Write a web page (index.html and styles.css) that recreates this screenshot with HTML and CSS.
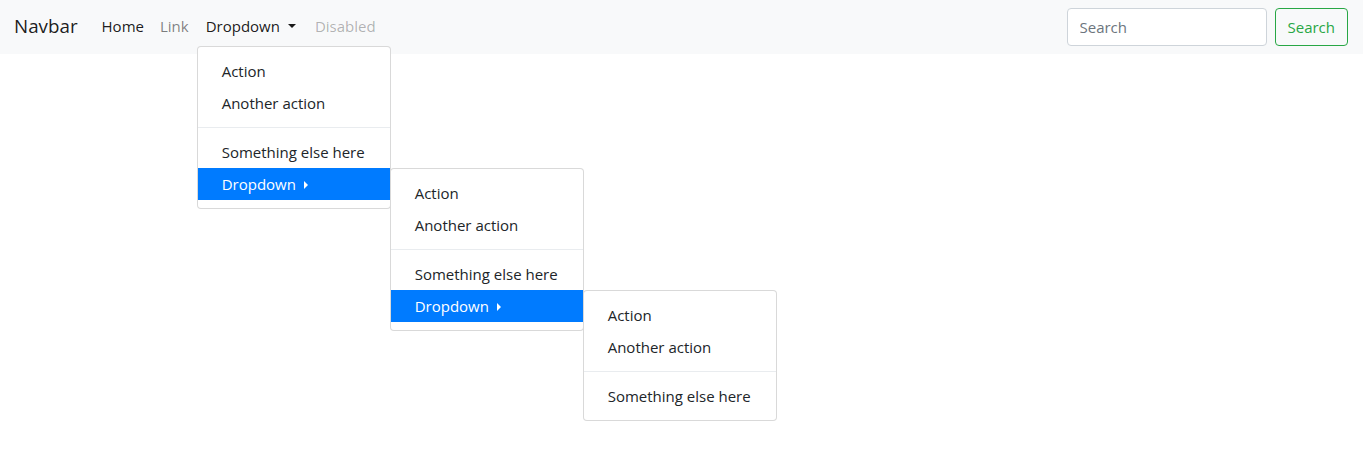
FILE: index.html
```html
<!DOCTYPE html>
<html lang="en">
<head>
<meta charset="utf-8">
<title>Navbar</title>
<link rel="stylesheet" href="styles.css">
</head>
<body>
<nav class="navbar">
  <a class="brand" href="#">Navbar</a>
  <ul class="nav">
    <li class="nav-item"><a class="nav-link active" href="#">Home</a></li>
    <li class="nav-item"><a class="nav-link" href="#">Link</a></li>
    <li class="nav-item dropdown">
      <a class="nav-link active toggle" href="#">Dropdown<span class="caret"></span></a>
      <ul class="menu menu-top">
        <li><a class="item" href="#">Action</a></li>
        <li><a class="item" href="#">Another action</a></li>
        <li class="divider"></li>
        <li><a class="item" href="#">Something else here</a></li>
        <li class="sub">
          <a class="item selected" href="#">Dropdown<span class="caret-right"></span></a>
          <ul class="menu menu-sub">
            <li><a class="item" href="#">Action</a></li>
            <li><a class="item" href="#">Another action</a></li>
            <li class="divider"></li>
            <li><a class="item" href="#">Something else here</a></li>
            <li class="sub">
              <a class="item selected" href="#">Dropdown<span class="caret-right"></span></a>
              <ul class="menu menu-sub">
                <li><a class="item" href="#">Action</a></li>
                <li><a class="item" href="#">Another action</a></li>
                <li class="divider"></li>
                <li><a class="item" href="#">Something else here</a></li>
              </ul>
            </li>
          </ul>
        </li>
      </ul>
    </li>
    <li class="nav-item"><a class="nav-link disabled" href="#">Disabled</a></li>
  </ul>
  <form class="search">
    <input class="search-input" type="search" placeholder="Search">
    <button class="search-btn" type="button">Search</button>
  </form>
</nav>
</body>
</html>
```
FILE: styles.css
```css
* { box-sizing: border-box; }
html, body { margin: 0; }
body {
  min-height: 468px;
  font-family: "Open Sans", "Noto Sans", sans-serif;
  font-size: 15px;
  line-height: 24px;
  color: #212529;
  background: #fff;
}
a { text-decoration: none; }
ul { list-style: none; margin: 0; padding: 0; }

.navbar {
  position: relative;
  z-index: 5;
  display: flex;
  align-items: center;
  padding: 8px 15px 8px 14px;
  background: #f8f9fa;
  height: 54px;
}
.brand {
  font-size: 18.8px;
  line-height: 30px;
  padding: 4px 0 6px;
  margin-right: 16px;
  color: rgba(0,0,0,.9);
}
.nav {
  display: flex;
  flex: 1;
}
.nav-item { position: relative; }
.nav-link {
  display: block;
  padding: 7px 8px 9px;
  color: rgba(0,0,0,.5);
}
.nav-link.toggle { padding-left: 9px; padding-right: 11px; }
.nav-link.active { color: rgba(0,0,0,.9); }
.nav-link.disabled { color: rgba(0,0,0,.3); }
.caret {
  display: inline-block;
  margin-left: 8px;
  vertical-align: 4px;
  border-top: 4.8px solid;
  border-left: 4.8px solid transparent;
  border-right: 4.8px solid transparent;
}

.menu {
  position: absolute;
  z-index: 10;
  min-width: 194px;
  padding: 8px 0;
  background: #fff;
  border: 1px solid rgba(0,0,0,.15);
  border-radius: 4px;
  white-space: nowrap;
}
.menu-top { left: 0; top: 39px; }
.sub { position: relative; }
.menu-sub { left: 100%; top: 0; }
.item {
  display: block;
  padding: 4px 24px;
  color: #212529;
}
.item.selected { background: #007bff; color: #fff; }
.caret-right {
  display: inline-block;
  margin-left: 8px;
  vertical-align: 1px;
  border-left: 4px solid;
  border-top: 4px solid transparent;
  border-bottom: 4px solid transparent;
}
.divider {
  height: 0;
  margin: 8px 0;
  border-top: 1px solid #e9ecef;
}

.search { display: flex; align-items: center; }
.search-input {
  width: 200px;
  height: 38px;
  padding: 6px 12px;
  margin-right: 8px;
  font: inherit;
  color: #495057;
  background: #fff;
  border: 1px solid #ced4da;
  border-radius: 4px;
}
.search-input::placeholder { color: #6c757d; }
.search-btn {
  height: 38px;
  padding: 6px 12px;
  font: inherit;
  color: #28a745;
  background: transparent;
  border: 1px solid #28a745;
  border-radius: 4px;
}
```
